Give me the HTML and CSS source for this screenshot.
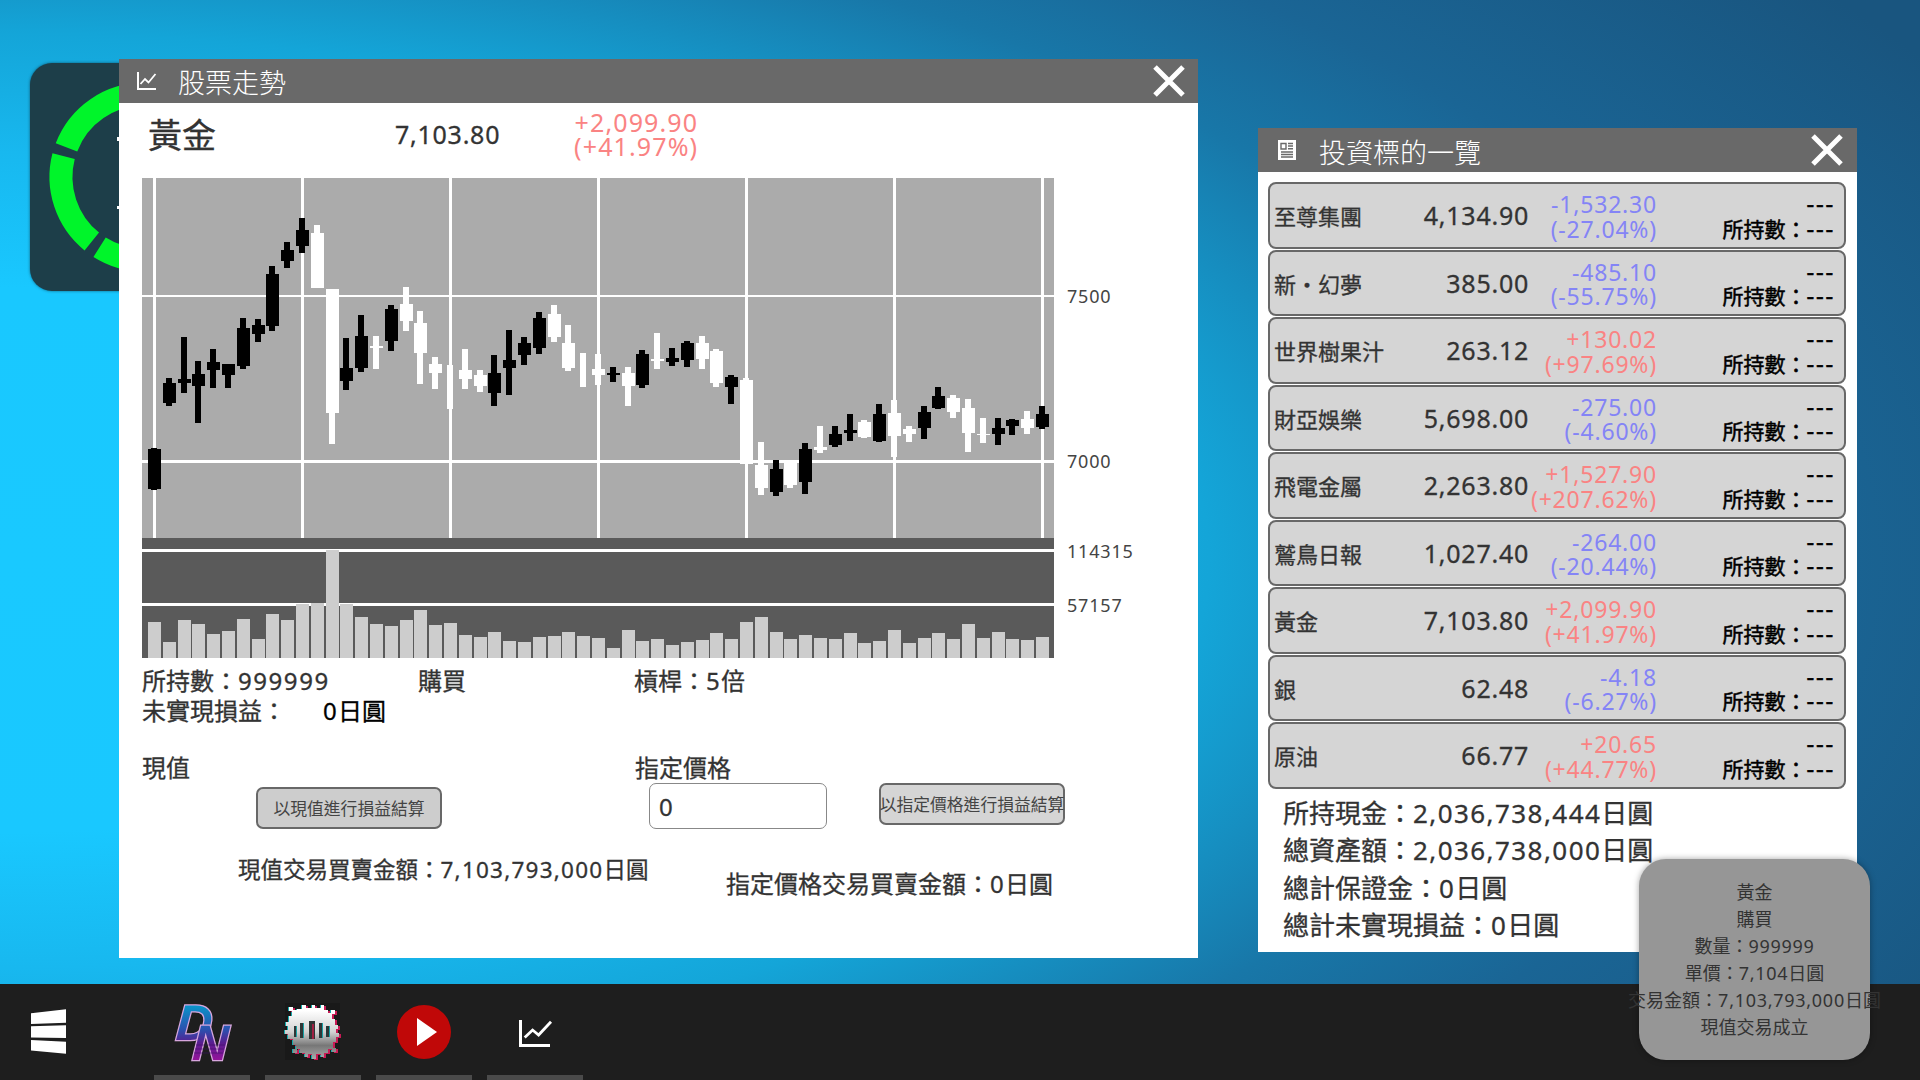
FILE: index.html
```html
<!DOCTYPE html>
<html lang="zh-Hant">
<head>
    <meta charset="UTF-8">
    <meta name="viewport" content="width=device-width, initial-scale=1.0">
    <title>股票走勢</title>
    <link rel="stylesheet" href="styles.css">
</head>
<body>
    <div class="desktop">
        <!-- Status widget behind the windows -->
        <div class="widget">
            <svg width="228" height="228" viewBox="30 63 228 228">
                <g fill="none" stroke="#00f52a" stroke-width="23">
                    <path d="M66.5 147.3A83 83 0 0 1 144 94"/>
                    <path d="M63.6 156.2A83 83 0 0 0 91.8 241.5"/>
                    <path d="M99.6 247.2A83 83 0 0 0 144 260"/>
                </g>
                <path d="M117 137h4v4h-4zM117 206h4v3h-4z" fill="#fff"/>
            </svg>
        </div>

        <!-- Stock chart window -->
        <section class="window chart-window">
            <header class="title-bar">
                <svg class="title-icon" width="20" height="18" viewBox="0 0 20 18" fill="none" stroke="#fff">
                    <path d="M1 0V17H19" stroke-width="2"/>
                    <path d="M3.5 12L8 7L11.5 10.5L18.5 2" stroke-width="1.8"/>
                </svg>
                <h1>股票走勢</h1>
                <svg class="close" width="32" height="32" viewBox="0 0 32 32"><path d="M2 2L30 30M30 2L2 30"/></svg>
            </header>
            <div class="quote">
                <div class="quote-name">黃金</div>
                <div class="quote-price num">7,103.80</div>
                <div class="quote-change num up">+2,099.90<br>(+41.97%)</div>
            </div>
            <svg id="chart" class="chart" width="1010" height="480"></svg>
            <div class="position">
                <div class="position-row">
                    <span class="held">所持數：<span class="num">999999</span></span>
                    <span class="side">購買</span>
                    <span>槓桿：<span class="num">5</span>倍</span>
                </div>
                <div class="position-row">
                    <span class="profit-label">未實現損益：</span>
                    <span class="profit"><span class="num">0</span>日圓</span>
                </div>
            </div>
            <div class="orders">
                <div class="order-market">
                    <div class="label">現值</div>
                    <button type="button" class="settle">以現值進行損益結算</button>
                    <div class="total">現值交易買賣金額：<span class="num">7,103,793,000</span>日圓</div>
                </div>
                <div class="order-limit">
                    <div class="label">指定價格</div>
                    <div class="limit-row">
                        <input type="text" class="num" value="0">
                        <button type="button" class="settle">以指定價格進行損益結算</button>
                    </div>
                    <div class="total">指定價格交易買賣金額：<span class="num">0</span>日圓</div>
                </div>
            </div>
        </section>

        <!-- List of investments -->
        <section class="window list-window">
            <header class="title-bar">
                <svg class="title-icon" width="18" height="20" viewBox="0 0 18 20">
                    <path fill="#fff" d="M0 0H18V20H0z"/>
                    <path fill="none" stroke="#696969" stroke-width="1.4" d="M3 3.5H8V9H3zM10 3.5H15M10 6H15M10 8.7H15M3 12H15M3 14.5H15M3 17H15"/>
                </svg>
                <h1>投資標的一覽</h1>
                <svg class="close" width="32" height="32" viewBox="0 0 32 32"><path d="M2 2L30 30M30 2L2 30"/></svg>
            </header>
            <div id="stocks" class="stocks"></div>
            <div class="summary">
                <div>所持現金：<span class="num">2,036,738,444</span>日圓</div>
                <div>總資產額：<span class="num">2,036,738,000</span>日圓</div>
                <div>總計保證金：<span class="num">0</span>日圓</div>
                <div>總計未實現損益：<span class="num">0</span>日圓</div>
            </div>
        </section>

        <!-- Taskbar -->
        <footer class="taskbar">
            <svg class="start" width="35" height="46" viewBox="0 0 35 46" fill="#fff">
                <path d="M0 4.3L35 .3V13.7L0 15zM0 17.3L35 16.3V29L0 28.5zM0 31L35 32.7V44.8L0 41.5z"/>
            </svg>
            <div class="task">
                <svg class="dn" width="64" height="64" viewBox="0 0 64 64">
                    <defs>
                        <linearGradient id="dn" x1="0" y1="0" x2="0" y2="60" gradientUnits="userSpaceOnUse">
                            <stop offset="0.1" stop-color="#0a93c9"/>
                            <stop offset="0.5" stop-color="#2c4fae"/>
                            <stop offset="0.72" stop-color="#5a1c8f"/>
                            <stop offset="1" stop-color="#94149b"/>
                        </linearGradient>
                    </defs>
                    <text x="8" y="40" textLength="36" lengthAdjust="spacingAndGlyphs" transform="skewX(-4)">D</text>
                    <text x="25" y="60" textLength="36" lengthAdjust="spacingAndGlyphs" transform="skewX(-3)">N</text>
                    <path d="M26 45H55M25 49H54M24 53H53" stroke="#3a1266" stroke-width="1" opacity=".6"/>
                </svg>
            </div>
            <div class="task">
                <svg width="60" height="60" viewBox="0 0 60 60" shape-rendering="crispEdges">
                    <defs>
                        <linearGradient id="gear" x1="0" y1="0" x2="0" y2="1">
                            <stop offset="0.1" stop-color="#fff"/>
                            <stop offset="0.5" stop-color="#d2d2d2"/>
                            <stop offset="0.75" stop-color="#777"/>
                            <stop offset="1" stop-color="#aaa"/>
                        </linearGradient>
                        <path id="blob" d="M19 5h4v3h6V5h3v3h6V5h3v5h4v3h3v-3h4v4h-3v5h3v6h3v4h-2v4h3v4h-3v5h-3v6h3v4h-4v-3h-4v4h-4v4h-3v-3h-5v5h-4v-5h-4v3h-3v-4h-5v-4h-3v4h-4v-4h3v-4h-3v-6H5v-5H2v-4h3v-4H3v-4h3v-6h3v-5H6v-4h4v3h4V9h5z"/>
                    </defs>
                    <path d="M2 3H57V60H2z" fill="#191919"/>
                    <use href="#blob" x="-1.5" y="0" fill="#12a9ac"/>
                    <use href="#blob" x="1.5" y="1" fill="#c91a55"/>
                    <use href="#blob" fill="url(#gear)"/>
                    <path d="M11 26h2v11h-2zM17 23h3v15h-3zM26 21h6v18h-6zM36 23h3v15h-3zM43 26h3v11h-3z" fill="#303636"/>
                    <path d="M13 26h1v11h-1zM20 23h1v15h-1zM39 23h1v15h-1zM46 26h1v11h-1z" fill="#18a0a5"/>
                    <path d="M29 24h2v15h-2z" fill="#a02042"/>
                </svg>
            </div>
            <div class="task">
                <svg width="60" height="60" viewBox="0 0 60 60">
                    <circle cx="30" cy="32" r="27" fill="#c00808"/>
                    <path d="M23 18L43 32L23 46z" fill="#fff"/>
                </svg>
            </div>
            <div class="task">
                <svg width="60" height="60" viewBox="0 0 60 60" fill="none" stroke="#fff">
                    <path d="M15.5 20V45.5H45" stroke-width="3"/>
                    <path d="M19.7 37.5L27.6 30L33.6 35L46 21.7" stroke-width="2.8"/>
                </svg>
            </div>
        </footer>

        <!-- Trade notification -->
        <div class="toast">
            <div>黃金</div>
            <div>購買</div>
            <div>數量：<span class="num">999999</span></div>
            <div>單價：<span class="num">7,104</span>日圓</div>
            <div>交易金額：<span class="num">7,103,793,000</span>日圓</div>
            <div>現值交易成立</div>
        </div>
    </div>
    <script src="script.js"></script>
</body>
</html>
```
FILE: styles.css
```css
/* General styles */
* {
    box-sizing: border-box;
}
body {
    margin: 0;
    font-family: "Noto Sans CJK TC", sans-serif;
    color: #333;
    -webkit-text-stroke: 0.3px;
}
.num {
    font-family: "Noto Sans", "Noto Sans CJK TC", sans-serif;
    letter-spacing: 0.055em;
}
span.num, .dash {
    line-height: 1;
}
.up {
    color: #fa8383;
    -webkit-text-stroke: 0;
}
.down {
    color: #8484f6;
    -webkit-text-stroke: 0;
}
.desktop {
    position: relative;
    width: 1920px;
    height: 1080px;
    overflow: hidden;
    background: radial-gradient(ellipse 1950px 850px at 0 560px, #19c9ff 0%, #19c8ff 32%, #18b8ef 48%, #14a5d8 62%, #1877a8 80%, #1a6595 92%, #19557f 115%);
}
/* Status widget */
.widget {
    position: absolute;
    left: 30px;
    top: 63px;
    width: 228px;
    height: 228px;
    border-radius: 22px;
    background: #1d3e49;
    box-shadow: 0 0 3px rgba(0, 0, 0, 0.5);
}
/* Windows */
.window {
    position: absolute;
    background: #fff;
}
.chart-window {
    left: 119px;
    top: 59px;
    width: 1079px;
    height: 899px;
}
.list-window {
    left: 1258px;
    top: 128px;
    width: 599px;
    height: 824px;
}
.title-bar {
    display: flex;
    align-items: center;
    height: 44px;
    padding: 0 13px 0 18px;
    background: #696969;
    color: #fff;
}
.title-bar h1 {
    flex: 1;
    margin: 0 0 0 21px;
    padding-top: 2px;
    font-size: 27px;
    font-weight: 300;
    line-height: 42px;
    -webkit-text-stroke: 0;
}
.list-window .title-bar {
    padding: 0 14px 0 20px;
}
.list-window h1 {
    margin-left: 23px;
    padding-top: 3px;
}
.close {
    stroke: #fff;
    stroke-width: 5;
}
/* Quote line above the chart */
.quote {
    display: flex;
    align-items: center;
    height: 75px;
    padding: 0 0 13px 29px;
}
.quote-name {
    width: 247px;
    font-size: 34px;
    line-height: 50px;
}
.quote-price {
    font-size: 25px;
    letter-spacing: 0.03em;
}
.quote-change {
    width: 198px;
    font-size: 25px;
    line-height: 24px;
    letter-spacing: 0.045em;
    text-align: right;
}
.chart {
    display: block;
    margin-left: 23px;
}
.chart text {
    font-family: "Noto Sans", sans-serif;
    font-size: 18px;
    letter-spacing: 0.045em;
    fill: #444;
}
/* Position info */
.position {
    padding: 7px 0 0 23px;
    font-size: 24px;
}
.position-row {
    display: flex;
    height: 30px;
    line-height: 30px;
}
.held {
    width: 276px;
}
.held .num {
    letter-spacing: 0.065em;
}
.side {
    width: 216px;
}
.profit-label {
    width: 181px;
}
.profit {
    color: #000;
}
/* Orders */
.orders {
    display: grid;
    grid-template-columns: 493px 1fr;
    padding: 27px 0 0 23px;
}
.label {
    font-size: 24px;
    line-height: 30px;
}
.settle {
    display: flex;
    align-items: center;
    justify-content: center;
    width: 186px;
    height: 42px;
    padding: 0;
    border: 2px solid #686868;
    border-radius: 7px;
    background: #cdcdcd;
    color: #444;
    font-family: inherit;
    font-size: 16.8px;
    white-space: nowrap;
    -webkit-text-stroke: 0;
}
.total {
    white-space: nowrap;
    line-height: 30px;
}
.order-market .settle {
    margin: 5px 0 0 114px;
}
.order-market .total {
    margin: 24px 0 0 96px;
    font-size: 22.5px;
}
.limit-row {
    display: flex;
    gap: 52px;
    padding: 1px 0 0 14px;
}
.limit-row input {
    width: 178px;
    height: 46px;
    padding: 0 9px;
    border: 1px solid #888;
    border-radius: 7px;
    color: #333;
    font-size: 24px;
}
.limit-row .settle {
    background: #d5d5d5;
}
.order-limit .total {
    margin: 39px 0 0 91px;
    font-size: 24px;
}
/* Investment rows */
.stocks {
    display: grid;
    grid-auto-rows: 66.5px;
    gap: 1px;
    padding: 10px 11px 0 10px;
}
.stock {
    display: grid;
    grid-template-columns: 137px 118px 128px 1fr;
    align-items: center;
    padding: 0 9px 0 4px;
    border: 2px solid #686868;
    border-radius: 8px;
    background: #d5d5d5;
    line-height: 24.5px;
    text-align: right;
}
.stock-name {
    font-size: 22px;
    text-align: left;
}
.stock-price {
    font-size: 25px;
    letter-spacing: 0.03em;
}
.stock-change {
    padding-top: 3px;
    font-size: 23px;
    letter-spacing: 0.035em;
    white-space: nowrap;
}
.stock-held {
    padding-top: 1px;
    font-size: 21px;
    color: #000;
    -webkit-text-stroke: 0.5px;
}
.dash {
    font-family: "Noto Sans", sans-serif;
    font-size: 24px;
    letter-spacing: 1.8px;
}
.summary {
    padding: 4px 0 0 25px;
    font-size: 26px;
    line-height: 37.6px;
}
/* Taskbar */
.taskbar {
    position: absolute;
    left: 0;
    top: 984px;
    display: flex;
    gap: 15px;
    width: 1920px;
    height: 96px;
    background: #1e1e1e;
}
.start {
    margin: 25px 73px 0 31px;
}
.task {
    display: flex;
    justify-content: center;
    width: 96px;
    padding-top: 16px;
    border-bottom: 5px solid #4a4a4a;
}
.dn {
    overflow: visible;
}
.dn text {
    font-family: "Liberation Sans", sans-serif;
    font-size: 50px;
    font-weight: bold;
    font-style: italic;
    fill: url(#dn);
    stroke: #d7a6dd;
    stroke-width: 2.5px;
    paint-order: stroke;
}
/* Notification */
.toast {
    position: absolute;
    left: 1639px;
    top: 859px;
    display: flex;
    flex-direction: column;
    align-items: center;
    width: 231px;
    height: 201px;
    padding-top: 19px;
    border-radius: 27px;
    background: #969696;
    box-shadow: 0 0 6px rgba(0, 0, 0, 0.35);
    font-size: 18px;
    line-height: 27px;
    white-space: nowrap;
    -webkit-text-stroke: 0;
}
.toast .num {
    letter-spacing: 0.04em;
}
```
FILE: script.js
```js
// Candles: [high, top of body, bottom of body, low, rising, volume], in chart pixels
const candles = [
    [270, 271, 311, 312, 1, 36], [200, 205, 225, 228, 1, 16], [159, 201, 205, 215, 1, 38],
    [183, 196, 208, 245, 1, 34], [171, 184, 192, 210, 1, 24], [186, 186, 197, 210, 1, 27],
    [140, 150, 188, 191, 1, 39], [141, 147, 156, 164, 1, 19], [88, 96, 148, 153, 1, 44],
    [64, 72, 83, 90, 1, 38], [40, 52, 68, 75, 1, 54], [47, 55, 110, 110, 0, 55],
    [111, 111, 235, 266, 0, 108], [160, 190, 203, 212, 1, 54], [137, 158, 190, 194, 1, 41],
    [158, 168, 170, 191, 0, 34], [127, 131, 163, 173, 1, 32], [109, 126, 143, 153, 0, 38],
    [133, 145, 175, 206, 0, 48], [179, 186, 195, 211, 0, 33], [187, 187, 187, 231, 0, 35],
    [171, 192, 201, 211, 0, 23], [192, 197, 208, 214, 0, 21], [177, 195, 215, 228, 1, 26],
    [152, 182, 190, 217, 1, 17], [159, 165, 177, 187, 1, 16], [134, 140, 170, 176, 1, 21],
    [127, 136, 159, 164, 0, 22], [147, 165, 190, 193, 0, 26], [175, 175, 175, 209, 0, 22],
    [176, 191, 197, 207, 0, 20], [189, 195, 197, 204, 1, 10], [189, 195, 208, 228, 0, 28],
    [172, 176, 207, 210, 1, 17], [155, 181, 183, 191, 0, 19], [170, 180, 184, 188, 1, 13],
    [163, 165, 182, 189, 1, 16], [158, 165, 181, 191, 0, 18], [171, 173, 205, 209, 0, 25],
    [197, 199, 209, 226, 1, 19], [200, 202, 286, 286, 0, 36], [264, 287, 310, 317, 0, 41],
    [282, 291, 314, 318, 1, 26], [283, 285, 307, 310, 0, 19], [265, 271, 304, 316, 1, 23],
    [248, 269, 272, 275, 0, 20], [248, 256, 267, 269, 1, 19], [236, 252, 255, 263, 1, 25],
    [242, 244, 259, 260, 0, 15], [226, 236, 263, 264, 1, 17], [222, 235, 258, 279, 0, 28],
    [248, 251, 256, 264, 0, 15], [228, 234, 250, 261, 1, 20], [209, 218, 230, 231, 1, 25],
    [217, 220, 234, 240, 0, 19], [221, 230, 255, 274, 0, 34], [240, 256, 257, 265, 0, 20],
    [240, 250, 256, 267, 1, 26], [241, 242, 248, 257, 1, 19], [233, 241, 250, 256, 0, 18],
    [228, 236, 249, 251, 1, 21]
];

const rect = (x, y, w, h, color) =>
    `<rect x="${x}" y="${y}" width="${w}" height="${h}" fill="${color}"/>`;

// Draws the candlestick and volume charts
function drawChart() {
    let out = rect(0, 0, 912, 360, '#ababab') + rect(0, 360, 912, 120, '#5a5a5a');
    for (let i = 0; i < 7; i++) {
        out += rect(11 + i * 148, 0, 3, 360, '#fff');
    }
    out += rect(0, 117, 912, 2, '#fff') + rect(0, 282, 912, 3, '#fff');
    out += rect(0, 371, 912, 3, '#fff') + rect(0, 425, 912, 3, '#fff');

    candles.forEach(([high, top, bottom, low, rising, volume], i) => {
        const x = Math.round(6 + i * 14.8);
        const color = rising ? '#000' : '#fff';
        out += rect(x + 3, high, 6, low - high, color);
        out += rect(x, top, 13, bottom - top, color);
        out += rect(x, 480 - volume, 13, volume, '#cdcdcd');
    });

    [['7500', 125], ['7000', 290], ['114315', 380], ['57157', 434]].forEach(([label, y]) => {
        out += `<text x="925" y="${y}">${label}</text>`;
    });
    document.getElementById('chart').innerHTML = out;
}

const stocks = [
    ['至尊集團', '4,134.90', '-1,532.30', '-27.04%'],
    ['新・幻夢', '385.00', '-485.10', '-55.75%'],
    ['世界樹果汁', '263.12', '+130.02', '+97.69%'],
    ['財亞娛樂', '5,698.00', '-275.00', '-4.60%'],
    ['飛電金屬', '2,263.80', '+1,527.90', '+207.62%'],
    ['鷲鳥日報', '1,027.40', '-264.00', '-20.44%'],
    ['黃金', '7,103.80', '+2,099.90', '+41.97%'],
    ['銀', '62.48', '-4.18', '-6.27%'],
    ['原油', '66.77', '+20.65', '+44.77%']
];

// Fills the investment list
function drawStocks() {
    document.getElementById('stocks').innerHTML = stocks.map(([name, price, change, percent]) => `
        <div class="stock">
            <div class="stock-name">${name}</div>
            <div class="stock-price num">${price}</div>
            <div class="stock-change num ${change[0] === '+' ? 'up' : 'down'}">${change}<br>(${percent})</div>
            <div class="stock-held"><span class="dash">---</span><br>所持數：<span class="dash">---</span></div>
        </div>`).join('');
}

drawChart();
drawStocks();
```
